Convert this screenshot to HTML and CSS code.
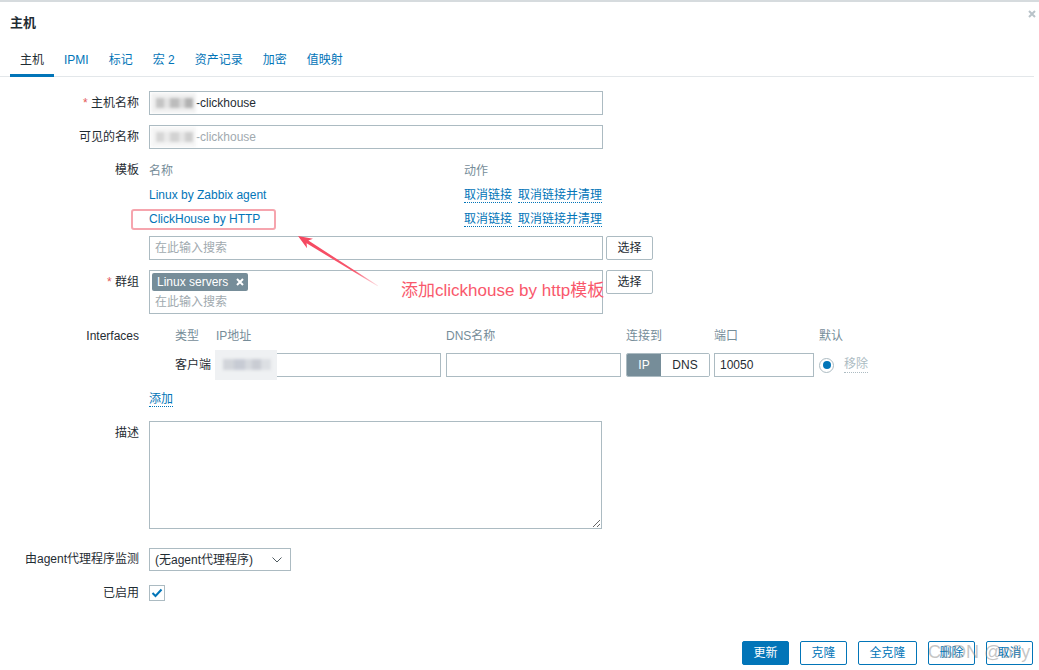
FILE: index.html
```html
<!DOCTYPE html>
<html lang="zh-CN">
<head>
<meta charset="utf-8">
<title>主机</title>
<link rel="stylesheet" href="styles.css">
</head>
<body>
<div class="dialog">
  <header class="head">
    <h1 class="title">主机</h1>
    <svg class="close" width="8" height="8" viewBox="0 0 8 8"><path d="M1 1L7 7M7 1L1 7" stroke="#b9c3c9" stroke-width="2"/></svg>
  </header>
  <nav class="tabs">
    <span class="tab active">主机</span>
    <span class="tab">IPMI</span>
    <span class="tab">标记</span>
    <span class="tab">宏 2</span>
    <span class="tab">资产记录</span>
    <span class="tab">加密</span>
    <span class="tab">值映射</span>
  </nav>

  <div class="form">
    <div class="row">
      <div class="lbl"><span class="req">*</span> 主机名称</div>
      <div class="field"><div class="input w453"><span class="blur"></span>-clickhouse</div></div>
    </div>

    <div class="row">
      <div class="lbl">可见的名称</div>
      <div class="field"><div class="input w453 ph"><span class="blur light"></span>-clickhouse</div></div>
    </div>

    <div class="row">
      <div class="lbl lbl-tpl">模板</div>
      <div class="field">
        <div class="tpl">
          <div class="th">名称</div>
          <div class="th">动作</div>
          <div class="tc"><span class="link">Linux by Zabbix agent</span></div>
          <div class="tc"><span class="ul">取消链接</span><span class="ul gap">取消链接并清理</span></div>
          <div class="tc marked"><span class="link">ClickHouse by HTTP</span><span class="mark"></span></div>
          <div class="tc"><span class="ul">取消链接</span><span class="ul gap">取消链接并清理</span></div>
        </div>
        <div class="line search-line">
          <div class="input w453 ph">在此输入搜索</div>
          <span class="btn">选择</span>
        </div>
      </div>
    </div>

    <div class="row">
      <div class="lbl"><span class="req">*</span> 群组</div>
      <div class="field line">
        <div class="ms w453">
          <div class="ms-tags"><span class="tag">Linux servers<svg width="8" height="8" viewBox="0 0 8 8"><path d="M1 1L7 7M7 1L1 7" stroke="#fff" stroke-width="2"/></svg></span></div>
          <div class="ms-input ph">在此输入搜索</div>
        </div>
        <span class="btn">选择</span>
      </div>
    </div>

    <div class="row">
      <div class="lbl">Interfaces</div>
      <div class="field">
        <div class="iface">
          <div></div>
          <div class="th">类型</div>
          <div class="th">IP地址</div>
          <div class="th">DNS名称</div>
          <div class="th">连接到</div>
          <div class="th">端口</div>
          <div class="th">默认</div>

          <div></div>
          <div class="ic">客户端</div>
          <div class="ic"><div class="input w225 redact-host"><span class="redact"><span class="redact-in"></span></span></div></div>
          <div class="ic"><div class="input w175"></div></div>
          <div class="ic">
            <div class="toggle"><span class="seg on">IP</span><span class="seg">DNS</span></div>
          </div>
          <div class="ic"><div class="input w100">10050</div></div>
          <div class="ic def"><span class="radio"><span class="dot"></span></span><span class="remove">移除</span></div>
        </div>
      </div>
    </div>

    <div class="row">
      <div class="lbl"></div>
      <div class="field add"><span class="ul">添加</span></div>
    </div>

    <div class="row">
      <div class="lbl">描述</div>
      <div class="field"><textarea class="ta"></textarea></div>
    </div>

    <div class="row row-proxy">
      <div class="lbl lbl-proxy">由agent代理程序监测</div>
      <div class="field">
        <div class="select">(无agent代理程序)<svg width="10" height="6" viewBox="0 0 10 6"><path d="M0.5 0.5L5 5L9.5 0.5" fill="none" stroke="#4f5a60" stroke-width="1"/></svg></div>
      </div>
    </div>

    <div class="row">
      <div class="lbl">已启用</div>
      <div class="field chk-line">
        <span class="checkbox"><svg width="12" height="10" viewBox="0 0 12 10"><path d="M1.5 5L4.5 8L10.5 1.5" fill="none" stroke="#0275b8" stroke-width="2"/></svg></span>
      </div>
    </div>
  </div>

  <footer class="footer">
    <span class="btn primary">更新</span>
    <span class="btn outline">克隆</span>
    <span class="btn outline">全克隆</span>
    <span class="btn outline">删除</span>
    <span class="btn outline">取消</span>
  </footer>

  <svg class="arrow" width="1039" height="670" viewBox="0 0 1039 670">
    <defs>
      <linearGradient id="fade" x1="298" y1="236" x2="378" y2="286" gradientUnits="userSpaceOnUse">
        <stop offset="0" stop-color="#f5475f"/>
        <stop offset="0.7" stop-color="#f7566c"/>
        <stop offset="1" stop-color="#f7566c" stop-opacity="0.15"/>
      </linearGradient>
    </defs>
    <polygon points="298,236 313,238.8 308.4,240.6 378,285.6 377.6,286.2 306.6,243.3 307,248.2" fill="url(#fade)"/>
  </svg>
  <div class="note">添加clickhouse by http模板</div>
  <div class="watermark">CSDN @ofiy</div>
</div>
</body>
</html>
```

FILE: styles.css
```css
* { box-sizing: border-box; }
html, body { margin: 0; padding: 0; background: #fff; }
body {
  font-family: "Liberation Sans", "Noto Sans CJK SC", Arial, sans-serif;
  font-size: 12px;
  line-height: 14px;
  color: #1f2c33;
}
.dialog {
  position: relative;
  width: 1039px;
  height: 670px;
  border-top: 2px solid #d6dbde;
  overflow: hidden;
  display: flex;
  flex-direction: column;
}
.head {
  height: 45px;
  display: flex;
  justify-content: space-between;
  align-items: flex-start;
  padding: 0 3px 0 10px;
}
.title {
  margin: 0;
  font-size: 13px;
  font-weight: bold;
  line-height: 42px;
  color: #1f2c33;
}
.close { margin-top: 8px; }
.tabs {
  display: flex;
  border-bottom: 1px solid #e3e7ea;
  margin-right: 5px;
  padding-left: 10px;
}
.tab {
  padding: 0 10px;
  line-height: 27px;
  border-bottom: 3px solid transparent;
  margin-bottom: -1px;
  color: #0275b8;
  white-space: nowrap;
}
.tab.active { color: #1f2c33; border-bottom-color: #0275b8; }

.form {
  padding-top: 14px;
  display: flex;
  flex-direction: column;
  gap: 10px;
}
.row {
  display: grid;
  grid-template-columns: 139px 1fr;
  column-gap: 10px;
  align-items: start;
}
.lbl {
  text-align: right;
  line-height: 24px;
  white-space: nowrap;
}
.lbl-tpl { line-height: 22px; }
.req { color: #e45959; }
.lbl-proxy { line-height: 23px; }
.row-proxy { margin-top: 9px; }

.input {
  height: 24px;
  border: 1px solid #acbbc2;
  background: #fff;
  padding: 0 5px;
  line-height: 22px;
  white-space: nowrap;
  overflow: hidden;
  display: flex;
  align-items: center;
}
.w453 { width: 454px; }
.w225 { width: 226px; }
.w175 { width: 175px; }
.w100 { width: 100px; }
.ph { color: #a1aaaf; }
.blur {
  display: inline-block;
  width: 45px;
  height: 20px;
  margin-left: -4px;
  margin-right: 0;
  background:
    linear-gradient(90deg, #efefef 0 12%, #c4c4c4 12% 30%, #e2e2e2 30% 42%, #bcbcbc 42% 62%, #d8d8d8 62% 76%, #b2b2b2 76% 94%, #f1f1f1 94%) center / 100% 10px no-repeat,
    #f1f1f1;
  filter: blur(1.4px);
}
.blur.light {
  background:
    linear-gradient(90deg, #f5f5f5 0 12%, #d6d6d6 12% 30%, #eaeaea 30% 42%, #d2d2d2 42% 62%, #e6e6e6 62% 76%, #cecece 76% 94%, #f5f5f5 94%) center / 100% 10px no-repeat,
    #f5f5f5;
}

.link { color: #0275b8; }
.ul {
  color: #0275b8;
  border-bottom: 1px dotted #0275b8;
}
.gap { margin-left: 6px; }
.th { color: #768d99; }

.tpl {
  display: grid;
  grid-template-columns: 315px auto;
  grid-auto-rows: 24px;
  align-items: center;
}
.tc { line-height: 16px; }
.marked { position: relative; height: 24px; display: flex; align-items: center; }
.mark {
  position: absolute;
  left: -18px;
  top: 2px;
  width: 145px;
  height: 21px;
  border: 2px solid #f6a5ae;
  border-radius: 3px;
}
.line { display: flex; gap: 3px; align-items: flex-start; }
.search-line { margin-top: 5px; }
.btn {
  display: inline-flex;
  align-items: center;
  justify-content: center;
  height: 24px;
  padding: 0 10.5px;
  border: 1px solid #acbbc2;
  border-radius: 2px;
  background: #fff;
  color: #1f2c33;
  white-space: nowrap;
}

.ms {
  height: 44px;
  border: 1px solid #acbbc2;
  padding: 2px;
}
.ms-tags { height: 18px; display: flex; }
.tag {
  display: inline-flex;
  align-items: center;
  gap: 8px;
  height: 18px;
  padding: 0 4px 0 5px;
  background: #768d99;
  color: #fff;
  border-radius: 2px;
}
.ms-input { height: 20px; line-height: 22px; padding-left: 3px; }

.iface {
  display: grid;
  grid-template-columns: 26px 40px 231px 180px 88px 105px auto;
  grid-template-rows: 24px 24px;
  row-gap: 5px;
  align-items: center;
}
.iface .th { line-height: 14px; }
.iface .th:nth-child(3) { padding-left: 1px; }
.ic { display: flex; align-items: center; height: 24px; }
.redact-host { position: relative; overflow: visible; }
.redact {
  position: absolute;
  left: -1px;
  top: -4px;
  width: 62px;
  height: 30px;
  background: #eff1f3;
}
.redact-in {
  position: absolute;
  left: 8px;
  top: 9px;
  width: 48px;
  height: 11px;
  background: linear-gradient(90deg, #d2d5da 0 22%, #c7cbd4 22% 45%, #d6d9de 45% 60%, #c9ccd3 60% 80%, #dcdfe3 80%);
  filter: blur(1.4px);
}
.toggle {
  display: flex;
  width: 84px;
  height: 24px;
  border: 1px solid #acbbc2;
  border-radius: 2px;
  overflow: hidden;
}
.seg {
  flex: 1;
  display: flex;
  align-items: center;
  justify-content: center;
  background: #fff;
}
.seg.on { flex: 0 0 34px; background: #768d99; color: #fff; }
.def { gap: 10px; }
.radio {
  width: 15px;
  height: 15px;
  border: 1px solid #acbbc2;
  border-radius: 50%;
  display: flex;
  align-items: center;
  justify-content: center;
}
.dot { width: 8px; height: 8px; border-radius: 50%; background: #0275b8; }
.remove {
  color: #acbbc2;
  border-bottom: 1px dotted #acbbc2;
  line-height: 15px;
}
.add { line-height: 24px; }

.ta {
  display: block;
  width: 453px;
  height: 108px;
  margin: 0;
  border: 1px solid #acbbc2;
  border-radius: 0;
  resize: vertical;
  font: inherit;
  background: #fff;
}
.select {
  width: 142px;
  height: 23px;
  border: 1px solid #acbbc2;
  padding: 0 8px 0 5px;
  display: flex;
  align-items: center;
  justify-content: space-between;
  white-space: nowrap;
}
.chk-line { height: 24px; display: flex; align-items: center; }
.checkbox {
  width: 16px;
  height: 16px;
  border: 1px solid #acbbc2;
  display: flex;
  align-items: center;
  justify-content: center;
}

.footer {
  margin-top: auto;
  display: flex;
  justify-content: flex-end;
  gap: 11px;
  padding: 0 6px 5px 0;
}
.btn.primary { background: #0275b8; border-color: #0275b8; color: #fff; }
.btn.outline { border-color: #0275b8; color: #0275b8; }

.arrow { position: absolute; left: 0; top: -2px; pointer-events: none; }
.note {
  position: absolute;
  left: 401px;
  top: 279px;
  font-size: 17px;
  line-height: 20px;
  color: #f9586c;
  white-space: nowrap;
}
.watermark {
  position: absolute;
  left: 928px;
  top: 638px;
  font-size: 18px;
  line-height: 24px;
  color: rgba(140, 140, 140, 0.5);
  white-space: nowrap;
  pointer-events: none;
}
```
